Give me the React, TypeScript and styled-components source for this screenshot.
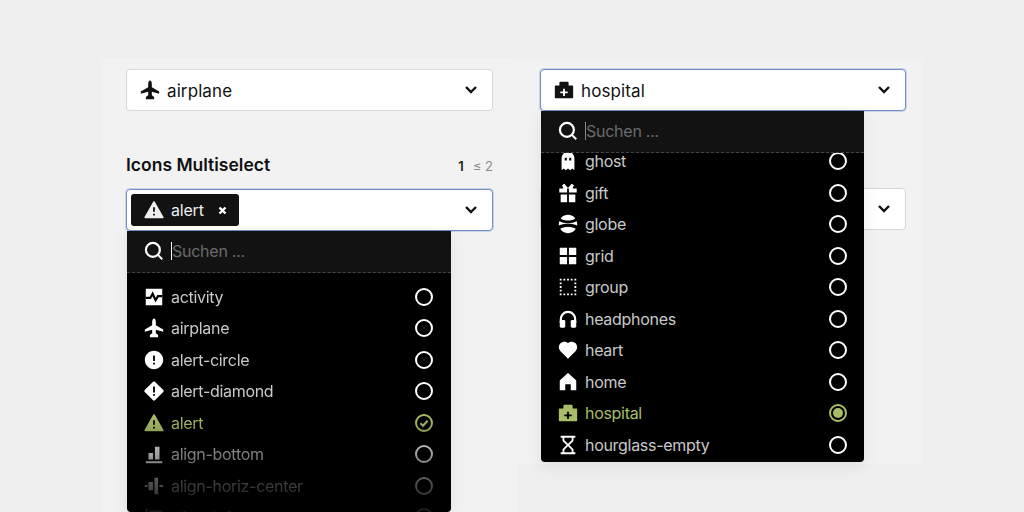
import React from 'react';
import styled, { createGlobalStyle } from 'styled-components';
import { RiAlertFill, RiErrorWarningFill, RiHeartFill } from 'react-icons/ri';

const GlobalStyle = createGlobalStyle`
  html, body { margin: 0; padding: 0; }
  body {
    background: #efefef;
    font-family: Inter, "Liberation Sans", sans-serif;
    color: #111;
  }
`;

const Page = styled.div`
  width: 1024px;
  height: 512px;
  overflow: hidden;
  display: flex;
  align-items: flex-start;
  padding-left: 101px;
  box-sizing: border-box;
`;

const Panel = styled.section<{ $top: number; $width: number; $height: number; $padLeft: number; $padTop: number; $padRight: number }>`
  margin-top: ${p => p.$top}px;
  width: ${p => p.$width}px;
  height: ${p => p.$height}px;
  padding: ${p => p.$padTop}px ${p => p.$padRight}px 0 ${p => p.$padLeft}px;
  box-sizing: border-box;
  background: #f2f2f2;
  flex-shrink: 0;
`;

const Field = styled.div<{ $gap?: number }>`
  position: relative;
  margin-top: ${p => p.$gap ?? 0}px;
`;

const Header = styled.div`
  display: flex;
  justify-content: space-between;
  align-items: center;
  height: 24px;
  margin-top: 41px;
  margin-bottom: 13px;
`;

const Label = styled.label`
  font-size: 17.5px;
  font-weight: 600;
  color: #111;
`;

const Counter = styled.div`
  display: flex;
  gap: 9px;
  font-size: 13px;
  color: #8a8a8a;
  padding-top: 3px;
  b {
    color: #222;
    font-weight: 600;
  }
`;

const SelectBox = styled.div<{ $focus?: boolean }>`
  height: 42px;
  box-sizing: border-box;
  display: flex;
  align-items: center;
  background: #fff;
  border-radius: 4px;
  border: 1px solid ${p => (p.$focus ? '#6f8fc4' : '#d8d8d8')};
  box-shadow: ${p => (p.$focus ? '0 0 0 1px rgba(111,143,196,.3)' : 'none')};
  padding: 0 14px 0 12px;
  font-size: 17px;
  letter-spacing: 0.1px;
  color: #111;
`;

const SelectValue = styled.span`
  flex: 1;
  padding-top: 2px;
`;

const ValueIcon = styled.span`
  width: 22px;
  height: 22px;
  margin-right: 6px;
  font-size: 22px;
  display: flex;
  color: #111;
`;

const ChevronSvg = styled.svg`
  flex-shrink: 0;
  margin-top: -1px;
  fill: none;
  stroke: #111;
  stroke-width: 2.4;
`;

const Chevron = () => (
  <ChevronSvg viewBox="0 0 14 10" width="14" height="10">
    <path d="M2 2l5 5 5-5" />
  </ChevronSvg>
);

const Chip = styled.div`
  height: 32px;
  width: 108px;
  margin-left: -8px;
  box-sizing: border-box;
  display: flex;
  align-items: center;
  padding-left: 12px;
  background: #121212;
  color: #eee;
  border-radius: 3px;
  font-size: 16px;
  letter-spacing: -0.2px;
`;

const ChipLabel = styled.span`
  margin-left: 6px;
  flex: 1;
`;

const ChipCloseSvg = styled.svg`
  margin-right: 12px;
  fill: none;
  stroke: #fff;
  stroke-width: 2.4;
`;

const ChipClose = () => (
  <ChipCloseSvg viewBox="0 0 9 9" width="9" height="9">
    <path d="M1.500 1.500l6 6M7.500 1.500l-6 6" />
  </ChipCloseSvg>
);

const Dropdown = styled.div<{ $inset: number; $width: number }>`
  position: absolute;
  z-index: 2;
  top: 42px;
  left: ${p => p.$inset}px;
  width: ${p => p.$width}px;
  background: #000;
  border-radius: 0 0 4px 4px;
  box-shadow: 0 4px 16px rgba(0, 0, 0, 0.08);
  overflow: hidden;
`;

const SearchBar = styled.div`
  height: 39px;
  display: flex;
  align-items: center;
  background: #121212;
  border-bottom: 1px dashed #444;
  box-sizing: content-box;
  padding: 0 0 2px 16px;
  color: #fff;
`;

const SearchSvg = styled.svg`
  margin-right: 6px;
  flex-shrink: 0;
  fill: none;
  stroke: #fff;
`;

const SearchIcon = () => (
  <SearchSvg viewBox="0 0 24 24" width="22" height="22">
    <circle cx="10.800" cy="10.800" r="7.600" strokeWidth="2.400" />
    <path d="M16.500 16.500l4.500 4.500" strokeWidth="2.200" />
  </SearchSvg>
);

const Caret = styled.span<{ $dim?: boolean }>`
  width: 1px;
  height: 18px;
  background: ${p => (p.$dim ? '#8a8a8a' : '#fff')};
  flex-shrink: 0;
`;

const SearchInput = styled.input`
  flex: 1;
  min-width: 0;
  border: 0;
  outline: 0;
  padding: 0;
  background: transparent;
  font: inherit;
  font-size: 16px;
  letter-spacing: -0.25px;
  color: #fff;
  &::placeholder {
    color: #6b6b6b;
    opacity: 1;
  }
`;

const List = styled.div<{ $offset: number; $height: number; $fade?: boolean; $bleed?: number }>`
  height: ${p => p.$height}px;
  overflow: hidden;
  ${p => (p.$fade ? 'mask-image: linear-gradient(to bottom, #000 60%, rgba(0,0,0,.62) 76%, rgba(0,0,0,.3) 88%, rgba(0,0,0,.1) 100%);' : '')}
  > div {
    margin-top: ${p => p.$offset}px;
    margin-right: -${p => p.$bleed ?? 0}px;
  }
`;

const Row = styled.div<{ $active?: boolean }>`
  height: 31.5px;
  display: flex;
  align-items: center;
  padding: 0 18px 0 16px;
  font-size: 16px;
  letter-spacing: -0.3px;
  color: ${p => (p.$active ? '#a7bd68' : '#c9c9c9')};
`;

const RowIcon = styled.span<{ $active?: boolean }>`
  width: 22px;
  height: 22px;
  margin-right: 6px;
  font-size: 22px;
  display: flex;
  color: ${p => (p.$active ? '#a7bd68' : '#fff')};
`;

const RowText = styled.span`
  flex: 1;
`;

const Radio = styled.span<{ $active?: boolean }>`
  width: 18px;
  height: 18px;
  box-sizing: border-box;
  border: 2px solid ${p => (p.$active ? '#a7bd68' : '#fff')};
  border-radius: 50%;
  display: flex;
  align-items: center;
  justify-content: center;
`;

const RadioDot = styled.span`
  width: 10px;
  height: 10px;
  border-radius: 50%;
  background: #a7bd68;
`;

const Svg: React.FC<{ children: React.ReactNode }> = ({ children }) => (
  <svg viewBox="0 0 24 24" width="1em" height="1em" fill="currentColor">{children}</svg>
);

const AirplaneIcon = () => (
  <Svg>
    <path d="M12 1.500c1.100 0 2 1.700 2 4.200V9l8 4.500V16l-8-2.200v4l2.500 1.800V22H7.500v-2.400l2.500-1.800v-4L2 16v-2.500L10 9V5.700c0-2.500.9-4.200 2-4.200z" />
  </Svg>
);
const ActivityIcon = () => (
  <Svg>
    <path d="M3 3h18v18H3z" />
    <path d="M3 13h5l2.500-4.500 3.200 7 2.600-4.500H21" fill="none" stroke="#000" strokeWidth="2.400" />
  </Svg>
);
const AlertDiamondIcon = () => (
  <Svg>
    <path fillRule="evenodd" d="M12 1.500c.4 0 .8.200 1 .4l9.100 9.100c.6.6.6 1.400 0 2L13 22.100c-.6.6-1.400.6-2 0L1.900 13c-.6-.6-.6-1.400 0-2L11 1.900c.2-.2.6-.4 1-.4zM11 7v6.500h2V7zm0 8.200v2h2v-2z" />
  </Svg>
);
const AlignBottomIcon = () => (
  <Svg>
    <path d="M3 20h18v2H3zM6 11h5v7H6zM13 4h5v14h-5z" />
  </Svg>
);
const AlignHorizIcon = () => (
  <Svg>
    <path d="M2 11h3v2H2zM6 7.500h5v9H6zM12.500 3h4v18h-4zM18 11h4v2h-4z" />
  </Svg>
);
const AlignLeftIcon = () => (
  <Svg>
    <path d="M3 3h2v18H3zM7 5h14v5H7zM7 13h8v5H7z" />
  </Svg>
);
const GhostIcon = () => (
  <Svg>
    <path fillRule="evenodd" d="M12 2C8 2 5 5 5 9v13l2.300-1.800L9.700 22l2.300-1.800 2.300 1.800 2.400-1.800L19 22V9c0-4-3-7-7-7zM8.500 8.500h2.200v3H8.500zm4.800 0h2.200v3h-2.200z" />
  </Svg>
);
const GiftIcon = () => (
  <Svg>
    <path d="M2.500 7H7L5.500 3.500 8 2l4 4.500L16 2l2.500 1.500L17 7h4.500v4.500H13V7h-2v4.500H2.500zM4 13.500h7V22H4zM13 13.500h7V22h-7z" />
  </Svg>
);
const GlobeIcon = () => (
  <Svg>
    <path d="M12 2a10 10 0 0 1 8 4c-2 1.500-5 2.200-8 2.200S6 7.500 4 6a10 10 0 0 1 8-4z" />
    <path d="M2.500 9c2.500 1.400 6 2.100 9.500 2.100S19 10.400 21.500 9c.3.900.5 1.900.5 3 0 .5 0 1-.1 1.500-2.500-1.200-6-1.900-9.900-1.900s-7.400.7-9.900 1.900C2 13 2 12.500 2 12c0-1.100.2-2.100.5-3z" />
    <path d="M3.500 17.300c2-1.300 5-2 8.500-2s6.500.7 8.500 2A10 10 0 0 1 12 22a10 10 0 0 1-8.500-4.700z" />
  </Svg>
);
const GridIcon = () => (
  <Svg>
    <path d="M3 3h8v8H3zM13 3h8v8h-8zM3 13h8v8H3zM13 13h8v8h-8z" />
  </Svg>
);
const GroupIcon = () => (
  <Svg>
    <path d="M3 3h2v2H3zM7 3h2v2H7zM11 3h2v2h-2zM15 3h2v2h-2zM19 3h2v2h-2zM3 7h2v2H3zM19 7h2v2h-2zM3 11h2v2H3zM19 11h2v2h-2zM3 15h2v2H3zM19 15h2v2h-2zM3 19h2v2H3zM7 19h2v2H7zM11 19h2v2h-2zM15 19h2v2h-2zM19 19h2v2h-2z" />
  </Svg>
);
const HeadphonesIcon = () => (
  <Svg>
    <path d="M4.200 16v-4a7.800 7.800 0 0 1 15.600 0v4" fill="none" stroke="currentColor" strokeWidth="2.400" />
    <rect x="3" y="13" width="6" height="8.500" rx="1.500" />
    <rect x="15" y="13" width="6" height="8.500" rx="1.500" />
  </Svg>
);
const HomeIcon = () => (
  <Svg>
    <path d="M12 2.500c.4 0 .7.100 1 .4l7.500 6.800c.3.300.5.700.5 1.100V21h-6v-6.500H9V21H3V10.800c0-.4.200-.8.500-1.100L11 2.900c.3-.3.6-.4 1-.4z" />
  </Svg>
);
const HospitalIcon = () => (
  <Svg>
    <path fillRule="evenodd" d="M8 3h8a1 1 0 0 1 1 1v3h4a1 1 0 0 1 1 1v12a1 1 0 0 1-1 1H3a1 1 0 0 1-1-1V8a1 1 0 0 1 1-1h4V4a1 1 0 0 1 1-1zm3 7.500v3H8v2h3v3h2v-3h3v-2h-3v-3z" />
  </Svg>
);
const HourglassIcon = () => (
  <Svg>
    <path fillRule="evenodd" d="M4 2h16v2h-2v3.500L13.500 12l4.500 4.500V20h2v2H4v-2h2v-3.500l4.500-4.500L6 7.500V4H4zm4 2v2.700l4 4 4-4V4zm4 9.300-4 4V20h8v-2.700z" />
  </Svg>
);

const CheckRadio = () => (
  <svg viewBox="0 0 18 18" width="18" height="18" fill="none">
    <circle cx="9" cy="9" r="8" stroke="#a7bd68" strokeWidth="2" />
    <path d="M5.400 9.200 8 11.700l4.600-5" stroke="#a7bd68" strokeWidth="2" />
  </svg>
);

type Item = { name: string; icon: React.ReactNode; state?: 'check' | 'dot' };

const leftItems: Item[] = [
  { name: 'activity', icon: <ActivityIcon /> },
  { name: 'airplane', icon: <AirplaneIcon /> },
  { name: 'alert-circle', icon: <RiErrorWarningFill /> },
  { name: 'alert-diamond', icon: <AlertDiamondIcon /> },
  { name: 'alert', icon: <RiAlertFill />, state: 'check' },
  { name: 'align-bottom', icon: <AlignBottomIcon /> },
  { name: 'align-horiz-center', icon: <AlignHorizIcon /> },
  { name: 'align-left', icon: <AlignLeftIcon /> },
];

const rightItems: Item[] = [
  { name: 'ghost', icon: <GhostIcon /> },
  { name: 'gift', icon: <GiftIcon /> },
  { name: 'globe', icon: <GlobeIcon /> },
  { name: 'grid', icon: <GridIcon /> },
  { name: 'group', icon: <GroupIcon /> },
  { name: 'headphones', icon: <HeadphonesIcon /> },
  { name: 'heart', icon: <RiHeartFill /> },
  { name: 'home', icon: <HomeIcon /> },
  { name: 'hospital', icon: <HospitalIcon />, state: 'dot' },
  { name: 'hourglass-empty', icon: <HourglassIcon /> },
];

const Options: React.FC<{ items: Item[] }> = ({ items }) => (
  <div>
    {items.map(item => (
      <Row key={item.name} $active={!!item.state}>
        <RowIcon $active={!!item.state}>{item.icon}</RowIcon>
        <RowText>{item.name}</RowText>
        {item.state === 'check' ? (
          <CheckRadio />
        ) : (
          <Radio $active={item.state === 'dot'}>{item.state === 'dot' && <RadioDot />}</Radio>
        )}
      </Row>
    ))}
  </div>
);

const Search: React.FC<{ dim?: boolean }> = ({ dim }) => (
  <SearchBar>
    <SearchIcon />
    <Caret $dim={dim} />
    <SearchInput placeholder="Suchen ..." readOnly />
  </SearchBar>
);

export default function App() {
  return (
    <Page>
      <GlobalStyle />
      <Panel $top={58} $width={416} $height={454} $padTop={11} $padLeft={25} $padRight={24}>
        <SelectBox>
          <ValueIcon><AirplaneIcon /></ValueIcon>
          <SelectValue>airplane</SelectValue>
          <Chevron />
        </SelectBox>
        <Header>
          <Label>Icons Multiselect</Label>
          <Counter><b>1</b><span>≤ 2</span></Counter>
        </Header>
        <Field>
          <SelectBox $focus>
            <Chip>
              <RiAlertFill size={22} />
              <ChipLabel>alert</ChipLabel>
              <ChipClose />
            </Chip>
            <SelectValue />
            <Chevron />
          </SelectBox>
          <Dropdown $inset={1} $width={324}>
            <Search />
            <List $offset={8} $height={239} $fade>
              <Options items={leftItems} />
            </List>
          </Dropdown>
        </Field>
      </Panel>
      <Panel $top={60} $width={405} $height={404} $padTop={9} $padLeft={23} $padRight={16}>
        <Field>
          <SelectBox $focus>
            <ValueIcon><HospitalIcon /></ValueIcon>
            <SelectValue>hospital</SelectValue>
            <Chevron />
          </SelectBox>
          <Dropdown $inset={1} $width={323}>
            <Search dim />
            <List $offset={-7.5} $height={309} $bleed={1}>
              <Options items={rightItems} />
            </List>
          </Dropdown>
        </Field>
        <Field $gap={77}>
          <SelectBox>
            <SelectValue />
            <Chevron />
          </SelectBox>
        </Field>
      </Panel>
    </Page>
  );
}
